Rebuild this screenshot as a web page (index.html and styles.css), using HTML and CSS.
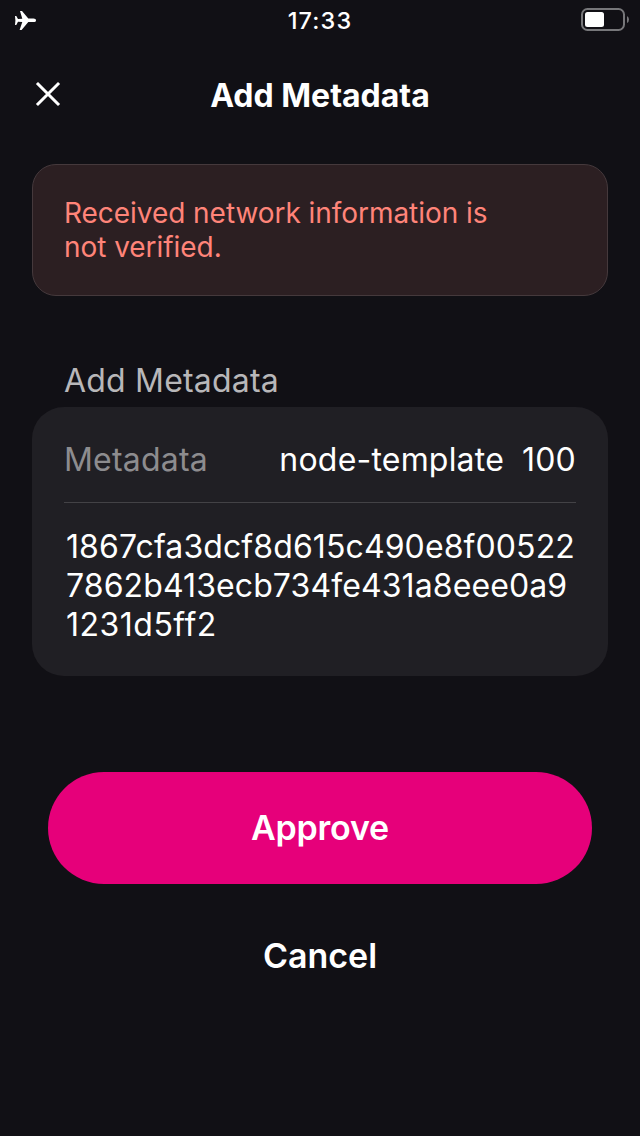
FILE: index.html
```html
<!DOCTYPE html>
<html lang="en">
<head>
<meta charset="utf-8">
<title>Add Metadata</title>
<link rel="stylesheet" href="styles.css">
</head>
<body>
<div class="status">
  <svg class="plane" width="24" height="24" viewBox="0 0 24 24"><path fill="#fff" d="M22 12.400c0-1.100-1-1.800-2.500-1.800h-5.200L8 3H6l2.300 7.700-4.300.3L2.300 8H1l.4 4.400L1 16.900h1.300L4 13.800l4.300.3L5.600 22h2l6.700-7.900h5.200c1.500 0 2.500-.7 2.500-1.700z"/></svg>
  <span class="time">17:33</span>
  <svg class="battery" width="48" height="24" viewBox="0 0 48 24"><rect x="1" y="1" width="42" height="21" rx="5.500" fill="none" stroke="#77777a" stroke-width="2"/><rect x="4" y="4" width="19" height="15" rx="2.500" fill="#fff"/><path d="M46 8v7q2-1 2-3.500T46 8z" fill="#77777a"/></svg>
</div>
<header class="header">
  <svg class="close" width="26" height="26" viewBox="0 0 26 26"><path d="M3 3l20 20M23 3L3 23" stroke="#fff" stroke-width="3" stroke-linecap="square" fill="none"/></svg>
  <h1 class="title">Add Metadata</h1>
</header>
<main class="main">
  <div class="warning">Received network information is<br>not verified.</div>
  <h2 class="label">Add Metadata</h2>
  <section class="card">
    <div class="row"><span class="key">Metadata</span><span class="value"><span>node-template</span><span>100</span></span></div>
    <div class="hash">1867cfa3dcf8d615c490e8f00522<br>7862b413ecb734fe431a8eee0a9<br><span class="hash-end">1231d5ff2</span></div>
  </section>
  <button class="approve">Approve</button>
  <button class="cancel">Cancel</button>
</main>
</body>
</html>
```
FILE: styles.css
```css
* { box-sizing: border-box; }
body { margin: 0; width: 640px; height: 1136px; background: #111015; color: #fff; font-family: Inter, sans-serif; }
.status { height: 40px; display: grid; grid-template-columns: 60px 1fr 60px; padding: 8px 0 0; }
.plane { margin-left: 14px; }
.time { text-align: center; font-size: 23.5px; line-height: 26px; font-weight: 500; letter-spacing: 1.1px; }
.battery { margin-left: 1px; }
.header { height: 124px; padding: 41px 35px 0; display: grid; grid-template-columns: 26px 1fr 26px; align-items: start; }
.title { margin: -5px 0 0; text-align: center; font-size: 32px; line-height: 40px; font-weight: 700; }
.main { padding: 0 32px; }
.warning { height: 132px; padding: 31px; border: 1px solid #45393c; border-radius: 24px; background: #2c1f22; color: #ff8479; font-size: 28px; line-height: 34px; letter-spacing: -.05px; }
.label { margin: 65px 0 6px; padding-left: 32px; font-size: 32px; line-height: 40px; font-weight: 400; color: #b8b7b9; letter-spacing: .2px; }
.card { height: 269px; padding: 0 32px; border-radius: 32px; background: #201f24; font-size: 32px; }
.row { height: 96px; padding-top: 33px; display: flex; justify-content: space-between; line-height: 40px; border-bottom: 1px solid #434246; letter-spacing: .2px; }
.key { color: #8d8c8f; }
.value { display: flex; gap: 18px; }
.hash { padding: 24px 2px; line-height: 39px; letter-spacing: .1px; }
.hash-end { letter-spacing: .5px; }
.approve, .cancel { display: block; border: 0; padding: 0; color: #fff; font: 600 34px/40px Inter, sans-serif; }
.approve { margin: 96px auto 0; width: 544px; height: 112px; border-radius: 56px; background: #e6007a; letter-spacing: -.2px; }
.cancel { margin: 16px auto 0; width: 544px; height: 112px; background: transparent; }
```
